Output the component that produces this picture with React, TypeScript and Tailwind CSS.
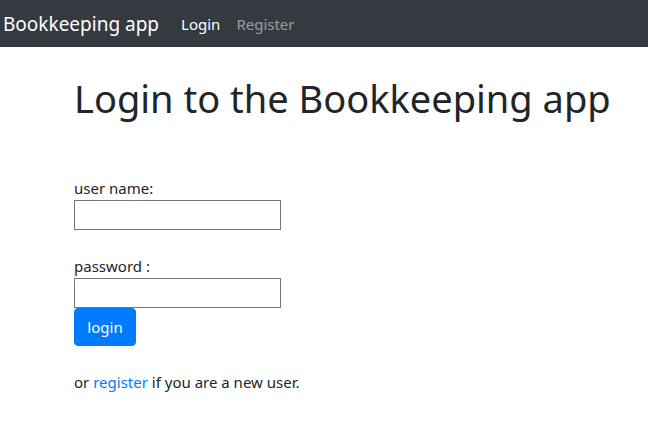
export default function App() {
  return (
    <div className="min-h-screen bg-white font-['Noto_Sans',sans-serif] text-[#212529]">
      <nav className="flex h-[47px] items-center bg-[#343a40] pl-[3px]">
        <a href="#" className="text-[19px] leading-[30px] text-white">
          Bookkeeping app
        </a>
        <div className="ml-[22px] flex items-center gap-[16px] text-[15px] leading-[24px]">
          <a href="#" className="text-white">
            Login
          </a>
          <a href="#" className="text-white/50">
            Register
          </a>
        </div>
      </nav>

      <main className="pl-[74px]">
        <h1 className="mt-[27px] text-[38px] leading-[48px] font-normal">Login to the Bookkeeping app</h1>

        <form className="mt-[54px] flex flex-col items-start text-[15px] leading-[24px]">
          <label htmlFor="username">user name:</label>
          <input
            id="username"
            type="text"
            className="h-[30px] w-[207px] border border-[#767676] bg-white px-1 outline-none"
          />
          <label htmlFor="password" className="mt-[24px]">
            password :
          </label>
          <input
            id="password"
            type="password"
            className="h-[30px] w-[207px] border border-[#767676] bg-white px-1 outline-none"
          />
          <button
            type="submit"
            className="h-[38px] w-[62px] rounded-[4px] border border-[#007bff] bg-[#007bff] text-white"
          >
            login
          </button>
        </form>

        <p className="mt-[24px] text-[15px] leading-[24px]">
          or{" "}
          <a href="#" className="text-[#007bff]">
            register
          </a>{" "}
          if you are a new user.
        </p>
      </main>
    </div>
  );
}
